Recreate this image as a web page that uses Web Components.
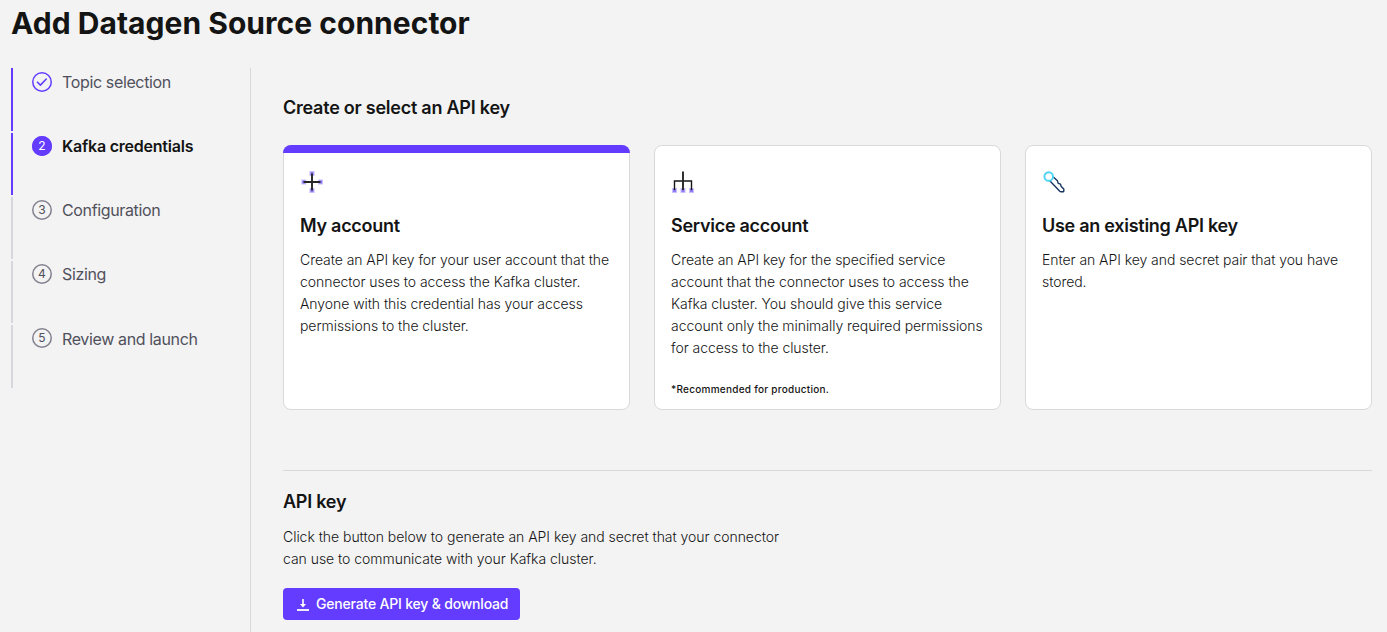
<!DOCTYPE html>
<html lang="en">
<head>
<meta charset="utf-8">
<title>Add Datagen Source connector</title>
<style>
html{height:100%;overflow:hidden}
body{margin:0;height:100%;overflow:hidden;background:#f3f3f3;color:#141414;font-family:Inter,"Liberation Sans",sans-serif}
</style>
</head>
<body>
<connector-page></connector-page>

<template id="t-page">
<style>
:host{display:flex;flex-direction:column;height:632px;box-sizing:border-box;padding:0 15px 0 11px}
h1{margin:0;height:68px;font-size:30px;line-height:46px;font-weight:700;letter-spacing:.03px}
.body{display:flex;flex:1;min-height:0}
nav{flex:none;width:239px;border-right:1px solid #d9d9dc}
main{flex:1;min-width:0;padding-left:32px}
h2{margin:0;font-size:18px;line-height:26px;font-weight:600;letter-spacing:-.24px}
.first{padding-top:27px}
.cards{display:grid;grid-template-columns:repeat(3,1fr);gap:24px;margin-top:24px}
hr{margin:60px 0 18px;border:0;height:1px;background:#d9d9dc}
p{margin:11px 0 18px;width:520px;font-size:14px;line-height:22px;font-weight:300;letter-spacing:-.035px}
</style>
<h1>Add Datagen Source connector</h1>
<div class="body">
<nav>
<wizard-step state="done">Topic selection</wizard-step>
<wizard-step state="current" number="2">Kafka credentials</wizard-step>
<wizard-step number="3">Configuration</wizard-step>
<wizard-step number="4">Sizing</wizard-step>
<wizard-step number="5">Review and launch</wizard-step>
</nav>
<main>
<h2 class="first">Create or select an API key</h2>
<div class="cards">
<option-card selected>
<svg slot="icon" width="24" height="24" viewBox="0 0 24 24"><path fill="#cbbeff" d="M9.500 1h5v5h-5zM9.500 18h5v5h-5zM1.300 9.500h5v5h-5zM18 9.500h5v5h-5z"/><path fill="#8f78f5" d="M10.500 2h3v3h-3zM10.500 19h3v3h-3zM2.300 10.500h3v3h-3zM19 10.500h3v3h-3z"/><path d="M12 3.500v17M3.500 12h17" stroke="#262626" stroke-width="1.900"/></svg>
<span slot="title">My account</span>
Create an API key for your user account that the<br>connector uses to access the Kafka cluster.<br>Anyone with this credential has your access<br>permissions to the cluster.
</option-card>
<option-card>
<svg slot="icon" width="24" height="24" viewBox="0 0 24 24"><path fill="#cbbeff" d="M1 18h5v5H1zM9.500 18h5v5h-5zM18 18h5v5h-5z"/><path fill="#8f78f5" d="M2 19h3v3H2zM10.500 19h3v3h-3zM19 19h3v3h-3z"/><path d="M3.500 20V11h17v9" fill="none" stroke="#141414" stroke-width="1.400"/><path d="M12 1.500V20" stroke="#262626" stroke-width="1.900"/></svg>
<span slot="title">Service account</span>
Create an API key for the specified service<br>account that the connector uses to access the<br>Kafka cluster. You should give this service<br>account only the minimally required permissions<br>for access to the cluster.
<span slot="note">*Recommended for production.</span>
</option-card>
<option-card>
<svg slot="icon" width="24" height="24" viewBox="0 0 24 24" fill="none" stroke-linejoin="round"><path d="M7.500 10.500l10.300 10.800q.5.500 1.200.5h2q.8 0 .8-.8v-1.900l-2.600-2.700-.7-2.200-2.300-.8-.8-2.600-4.300-4" stroke="#173361" stroke-width="1.400"/><circle cx="6.700" cy="6.500" r="4.300" fill="#fff" stroke="#4fd3f5" stroke-width="1.900"/></svg>
<span slot="title">Use an existing API key</span>
Enter an API key and secret pair that you have<br>stored.
</option-card>
</div>
<hr>
<h2>API key</h2>
<p>Click the button below to generate an API key and secret that your connector<br>can use to communicate with your Kafka cluster.</p>
<primary-button>Generate API key &amp; download</primary-button>
</main>
</div>
</template>

<template id="t-step">
<style>
:host{display:flex;height:64px;color:#50505c;font-size:16px;line-height:28px;letter-spacing:-.36px}
.bar{flex:none;width:2px;height:62px;margin-top:1px;background:#d7d6dd}
:host([state]) .bar{background:#633cff}
:host(:first-child) .bar{height:63px;margin-top:0}
:host(:last-child) .bar{height:63px}
:host(:last-child) .label{padding-top:1px}
.dot{flex:none;width:20px;height:20px;margin:4px 10px 0 19px;box-shadow:inset 0 0 0 1.500px #82808f;border-radius:50%;display:flex;align-items:center;justify-content:center;font-size:12px;line-height:20px;letter-spacing:0}
:host([state]) .dot{box-shadow:inset 0 0 0 1.500px #633cff}
:host([state=current]){color:#141414;font-weight:600;letter-spacing:-.22px}
:host([state=current]) .dot{background:#633cff;color:#fff;font-weight:400}
svg{flex:none}
</style>
<div class="bar"></div><div class="dot"></div><div class="label"><slot></slot></div>
</template>

<template id="t-card">
<style>
:host{display:block;box-sizing:border-box;height:265px;padding:24px 0 0 16px;background:#fff;border:1px solid #d9d9dc;border-radius:8px;position:relative}
.strip{display:none;position:absolute;left:-1px;right:-1px;top:-1px;height:8px;background:#633cff;border-radius:8px 8px 0 0}
:host([selected]) .strip{display:block}
.icon{height:24px}
.title{margin-top:19px;font-size:18px;line-height:26px;font-weight:600;letter-spacing:-.27px}
.text{margin-top:10px;font-size:14px;line-height:22px;font-weight:300;letter-spacing:-.055px;white-space:nowrap}
.note{margin-top:22px;font-size:10px;line-height:16px;font-weight:500;letter-spacing:.26px}
</style>
<div class="strip"></div>
<div class="icon"><slot name="icon"></slot></div>
<div class="title"><slot name="title"></slot></div>
<div class="text"><slot></slot></div>
<div class="note"><slot name="note"></slot></div>
</template>

<template id="t-button">
<style>
:host{display:block}
button{display:flex;align-items:center;width:237px;height:32px;box-sizing:border-box;border:0;border-radius:4px;background:#633cff;color:#fff;padding:0 0 0 12px;gap:5px;font:500 14px/22px Inter,"Liberation Sans",sans-serif;letter-spacing:-.19px;white-space:nowrap}
svg{flex:none}
</style>
<button><svg width="16" height="16" viewBox="0 0 16 16" fill="none" stroke="#fff"><path d="M8 3v6" stroke-width="1.600"/><path d="M5 8h6l-3 3.500z" fill="#fff" stroke="none"/><path d="M2 14h12" stroke-width="1.800"/></svg><slot></slot></button>
</template>

<script>
const define = (name, id, setup) => customElements.define(name, class extends HTMLElement {
  constructor() {
    super();
    this.attachShadow({mode: 'open'}).append(document.getElementById(id).content.cloneNode(true));
  }
  connectedCallback() { if (setup) setup(this); }
});
define('wizard-step', 't-step', el => {
  const dot = el.shadowRoot.querySelector('.dot');
  if (el.getAttribute('state') === 'done')
    dot.innerHTML = '<svg width="12" height="10" viewBox="0 0 12 10" fill="none" stroke="#633cff" stroke-width="1.6" stroke-linecap="round" stroke-linejoin="round"><path d="M1.500 5.200l2.900 2.900L10.300 2"/></svg>';
  else dot.textContent = el.getAttribute('number');
});
define('option-card', 't-card');
define('primary-button', 't-button');
define('connector-page', 't-page');
</script>
</body>
</html>
